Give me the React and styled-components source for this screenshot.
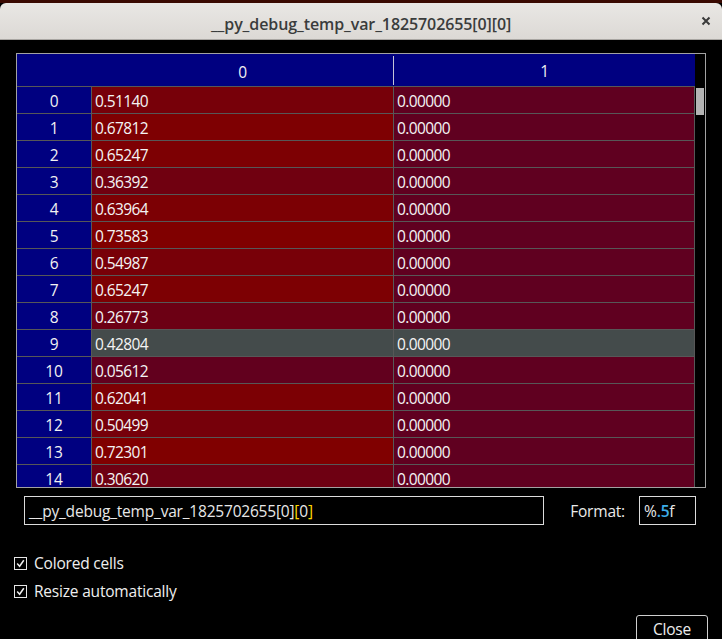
import React from 'react';
import styled, { createGlobalStyle } from 'styled-components';

const Global = createGlobalStyle`
  html, body { margin: 0; padding: 0; background: #000; }
  body {
    font-family: "Open Sans", "Noto Sans", "DejaVu Sans", sans-serif;
    overflow: hidden;
  }
`;

const FONT = `
  font-family: "Open Sans", "Noto Sans", sans-serif;
  font-size: 15.5px;
  font-stretch: 92%;
  letter-spacing: -0.2px;
`;

const Page = styled.div`
  width: 722px;
  height: 639px;
  overflow: hidden;
  background: #000;
  display: flex;
  flex-direction: column;
`;

const DesktopEdge = styled.div`
  flex: none;
  height: 3px;
  background: #3a0a02;
`;

const TitleBar = styled.div`
  flex: none;
  height: 36px;
  display: grid;
  grid-template-columns: 1fr auto 1fr;
  align-items: center;
  background: linear-gradient(#e9e7e4, #dcd9d5);
  border-radius: 6px 6px 0 0;
  border-bottom: 1px solid #a9a6a2;
  padding: 0 10px;
`;

const Title = styled.div`
  grid-column: 2;
  font-family: "Open Sans", "Noto Sans", sans-serif;
  font-weight: 600;
  font-size: 16px;
  color: #3a3c3c;
  letter-spacing: -0.1px;
  padding-top: 5px;
`;

const CloseX = styled.div`
  grid-column: 3;
  justify-self: end;
  width: 14px;
  height: 14px;
  display: flex;
  align-items: center;
  justify-content: center;
  margin-right: -1px;
`;

const Content = styled.div`
  flex: 1;
  display: flex;
  flex-direction: column;
  padding: 13px 16px 0 16px;
`;

const TableFrame = styled.div`
  flex: none;
  width: 690px;
  height: 435px;
  box-sizing: border-box;
  border: 1px solid #a3a3a3;
  display: flex;
  background: #000;
`;

const GridArea = styled.div`
  width: 678px;
  display: flex;
  flex-direction: column;
  overflow: hidden;
`;

const COLS = '75px 302px 301px';

const HeaderRow = styled.div`
  flex: none;
  display: grid;
  grid-template-columns: ${COLS};
  height: 33px;
  box-sizing: border-box;
  background: #000080;
  border-bottom: 1px solid #575757;
`;

const HeaderCell = styled.div`
  ${FONT};
  color: #f2f2f2;
  display: flex;
  align-items: center;
  justify-content: center;
  padding-top: 2px;
  border-right: ${(p) => (p.$sep ? '1px solid #c4c4d8' : 'none')};
  margin: ${(p) => (p.$sep ? '2px 0 1px' : '0')};
`;

const Body = styled.div`
  flex: 1;
  overflow: hidden;
`;

const Row = styled.div`
  display: grid;
  grid-template-columns: ${COLS};
  height: 27px;
`;

const IndexCell = styled.div`
  ${FONT};
  color: #f2f2f2;
  background: #000080;
  display: flex;
  align-items: center;
  justify-content: center;
  padding-top: 1px;
  box-sizing: border-box;
  border-right: 1px solid #575757;
  border-bottom: 1px solid #575757;
`;

const ValueCell = styled.div`
  ${FONT};
  letter-spacing: -0.6px;
  color: #f4f4f4;
  display: flex;
  align-items: center;
  padding: 1px 0 0 3px;
  box-sizing: border-box;
  border-right: 1px solid #575757;
  border-bottom: 1px solid #575757;
  background: ${(p) => p.$bg};
`;

const ScrollTrack = styled.div`
  width: 10px;
  background: #000;
  padding-top: 34px;
  box-sizing: border-box;
`;

const ScrollThumb = styled.div`
  margin-left: 1px;
  width: 8px;
  height: 27px;
  background: #b4b4b4;
`;

const FieldRow = styled.div`
  flex: none;
  display: flex;
  align-items: center;
  height: 29px;
  margin-top: 8px;
  padding: 0 10px 0 8px;
`;

const PathBox = styled.div`
  ${FONT};
  width: 520px;
  height: 29px;
  box-sizing: border-box;
  border: 1px solid #dcdcdc;
  display: flex;
  align-items: center;
  padding-left: 4px;
  color: #e8e8e8;
  white-space: pre;
`;

const Bracket = styled.span`
  color: #ffd800;
`;

const FormatLabel = styled.span`
  ${FONT};
  color: #eaeaea;
  margin-left: auto;
  margin-right: 14px;
`;

const FormatBox = styled.div`
  ${FONT};
  width: 57px;
  height: 29px;
  box-sizing: border-box;
  border: 1px solid #dcdcdc;
  display: flex;
  align-items: center;
  padding-left: 4px;
  color: #e8e8e8;
`;

const Accent = styled.span`
  color: #3daee9;
  font-weight: 600;
`;

const CheckList = styled.div`
  flex: none;
  margin: 24px 0 0 -2px;
  display: flex;
  flex-direction: column;
`;

const CheckRow = styled.label`
  display: flex;
  align-items: center;
  height: 28px;
  gap: 7px;
  ${FONT};
  color: #efefef;
`;

const Box = styled.span`
  width: 13px;
  height: 13px;
  box-sizing: border-box;
  border: 1px solid #e6e6e6;
  display: flex;
  align-items: center;
  justify-content: center;
  background: #000;
`;

const ButtonBar = styled.div`
  flex: none;
  display: flex;
  justify-content: flex-end;
  margin: 10px -2px 0 0;
`;

const Button = styled.button`
  ${FONT};
  width: 72px;
  height: 28px;
  box-sizing: border-box;
  background: #000;
  color: #eeeeee;
  border: 1px solid #cfcfcf;
  border-radius: 3px;
  padding: 0;
`;

const DATA = [
  0.5114, 0.67812, 0.65247, 0.36392, 0.63964, 0.73583, 0.54987, 0.65247,
  0.26773, 0.42804, 0.05612, 0.62041, 0.50499, 0.72301, 0.3062,
];

function heat(v) {
  const t = Math.min(1, Math.max(0, v / 0.72));
  const r = Math.round(0x60 + 0x20 * t);
  const b = Math.round(0x20 * (1 - t));
  return `rgb(${r},0,${b})`;
}

const SELECTED = '#444b4b';

function Check() {
  return (
    <Box>
      <svg width="9" height="9" viewBox="0 0 9 9">
        <polyline points="1.2,4.6 3.6,7.2 7.8,1.3" fill="none" stroke="#f0f0f0" strokeWidth="1.5" />
      </svg>
    </Box>
  );
}

export default function App() {
  return (
    <Page>
      <Global />
      <DesktopEdge />
      <TitleBar>
        <Title>__py_debug_temp_var_1825702655[0][0]</Title>
        <CloseX>
          <svg width="10" height="10" viewBox="0 0 10 10">
            <path d="M1.5 1.5 L8.5 8.5 M8.5 1.5 L1.5 8.5" stroke="#3a3a3a" strokeWidth="2" />
          </svg>
        </CloseX>
      </TitleBar>
      <Content>
        <TableFrame>
          <GridArea>
            <HeaderRow>
              <HeaderCell />
              <HeaderCell $sep>0</HeaderCell>
              <HeaderCell>1</HeaderCell>
            </HeaderRow>
            <Body>
              {DATA.map((v, i) => (
                <Row key={i}>
                  <IndexCell>{i}</IndexCell>
                  <ValueCell $bg={i === 9 ? SELECTED : heat(v)}>{v.toFixed(5)}</ValueCell>
                  <ValueCell $bg={i === 9 ? SELECTED : heat(0)}>0.00000</ValueCell>
                </Row>
              ))}
            </Body>
          </GridArea>
          <ScrollTrack>
            <ScrollThumb />
          </ScrollTrack>
        </TableFrame>
        <FieldRow>
          <PathBox>
            __py_debug_temp_var_1825702655[0]<Bracket>[</Bracket>0<Bracket>]</Bracket>
          </PathBox>
          <FormatLabel>Format:</FormatLabel>
          <FormatBox>
            %<Accent>.5</Accent>f
          </FormatBox>
        </FieldRow>
        <CheckList>
          <CheckRow>
            <Check />
            Colored cells
          </CheckRow>
          <CheckRow>
            <Check />
            Resize automatically
          </CheckRow>
        </CheckList>
        <ButtonBar>
          <Button>Close</Button>
        </ButtonBar>
      </Content>
    </Page>
  );
}
